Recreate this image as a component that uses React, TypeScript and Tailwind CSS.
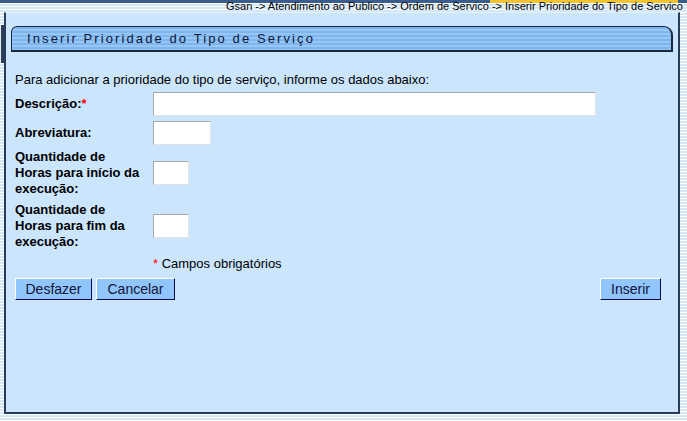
import React from 'react';

const Field = ({ w }: { w: string }) => (
  <div className={`${w} h-[24px] bg-white border border-t-[#a8a8a8] border-l-[#a8a8a8] border-r-[#e4e4e4] border-b-[#e4e4e4]`} />
);

const Btn = ({ label, w }: { label: string; w: string }) => (
  <button
    className={`${w} h-[22px] bg-[#90c6fb] border border-t-white border-l-white border-r-[#0a0a50] border-b-[#0a0a50] text-[14px] leading-[18px] text-[#141436]`}
  >
    {label}
  </button>
);

const App = () => {
  return (
    <div className="w-[687px] h-[421px] overflow-hidden bg-[repeating-linear-gradient(180deg,#ffffff_0px,#ffffff_1px,#d4e7f6_1px,#d4e7f6_3px)] font-['Liberation_Sans',Arial,sans-serif] text-black">
      {/* Top band + breadcrumb */}
      <div className="relative h-[12px]">
        <div className="flex h-[3px]">
          <div className="w-[490px] bg-[#3b5d8d]" />
          <div className="w-[188px] bg-[#f4c430]" />
          <div className="flex-1 bg-[#3b5d8d]" />
        </div>
        <div className="absolute right-[4px] top-[0px] text-[11px] leading-[12px] whitespace-nowrap">
          Gsan -&gt; Atendimento ao Publico -&gt; Ordem de Servico -&gt; Inserir Prioridade do Tipo de Servico
        </div>
      </div>

      <div className="flex">
        {/* left dark strip */}
        <div className="w-[3px] mt-[13px] h-[38px] bg-[#2c3f58] ml-[1px]" />

        {/* Main panel */}
        <div className="w-[676px] h-[402px] bg-[#cbe5fd] border-t border-t-[#e6f2fd] border-l-2 border-r-2 border-b-2 border-l-[#283c5a] border-r-[#283c5a] border-b-[#283c5a]">
          {/* Title bar */}
          <div className="ml-[5px] mt-[13px] w-[662px] h-[26px] rounded-tl-[6px] rounded-tr-[9px] border border-[#18283e] border-r-2 border-b-2 bg-[repeating-linear-gradient(180deg,#7fb5ef_0px,#7fb5ef_2px,#99c7f5_2px,#99c7f5_4px)] flex items-center pl-[15px]">
            <span className="text-[13px] tracking-[2.1px] text-[#0b1838]">Inserir Prioridade do Tipo de Serviço</span>
          </div>

          <div className="pl-[9px] text-[13px] leading-[16px]">
            <div className="mt-[20px]">
              Para adicionar a prioridade do tipo de serviço, informe os dados abaixo:
            </div>

            <div className="mt-[4px] flex items-center">
              <div className="w-[138px] font-bold">
                Descrição:<span className="text-[#ff0000]">*</span>
              </div>
              <Field w="w-[443px]" />
            </div>

            <div className="mt-[5px] flex items-center">
              <div className="w-[138px] font-bold">Abreviatura:</div>
              <Field w="w-[58px]" />
            </div>

            <div className="mt-[4px] flex items-center">
              <div className="w-[138px] font-bold">
                Quantidade de
                <br />
                Horas para início da
                <br />
                execução:
              </div>
              <Field w="w-[36px]" />
            </div>

            <div className="mt-[5px] flex items-center">
              <div className="w-[138px] font-bold">
                Quantidade de
                <br />
                Horas para fim da
                <br />
                execução:
              </div>
              <Field w="w-[36px]" />
            </div>

            <div className="mt-[6px] pl-[138px]">
              <span className="text-[#ff0000]">*</span> Campos obrigatórios
            </div>

            <div className="mt-[6px] flex items-center pr-[17px]">
              <Btn label="Desfazer" w="w-[77px]" />
              <div className="w-[4px]" />
              <Btn label="Cancelar" w="w-[79px]" />
              <div className="flex-1" />
              <Btn label="Inserir" w="w-[61px]" />
            </div>
          </div>
        </div>
      </div>
    </div>
  );
};

export default App;
